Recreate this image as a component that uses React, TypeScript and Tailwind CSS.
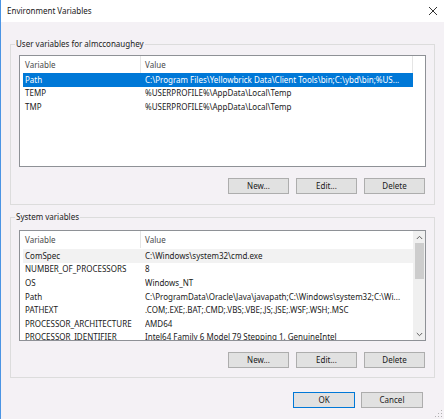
import React from "react";

type Row = { name: string; value: string };

const userVars: Row[] = [
  {
    name: "Path",
    value: "C:\\Program Files\\Yellowbrick Data\\Client Tools\\bin;C:\\ybd\\bin;%US...",
  },
  { name: "TEMP", value: "%USERPROFILE%\\AppData\\Local\\Temp" },
  { name: "TMP", value: "%USERPROFILE%\\AppData\\Local\\Temp" },
];

const systemVars: Row[] = [
  { name: "ComSpec", value: "C:\\Windows\\system32\\cmd.exe" },
  { name: "NUMBER_OF_PROCESSORS", value: "8" },
  { name: "OS", value: "Windows_NT" },
  {
    name: "Path",
    value: "C:\\ProgramData\\Oracle\\Java\\javapath;C:\\Windows\\system32;C:\\Wi...",
  },
  { name: "PATHEXT", value: ".COM;.EXE;.BAT;.CMD;.VBS;.VBE;.JS;.JSE;.WSF;.WSH;.MSC" },
  { name: "PROCESSOR_ARCHITECTURE", value: "AMD64" },
  { name: "PROCESSOR_IDENTIFIER", value: "Intel64 Family 6 Model 79 Stepping 1, GenuineIntel" },
];

function Button({ label, primary }: { label: string; primary?: boolean }) {
  return (
    <button
      className={`h-[16px] w-full flex items-center justify-center bg-[#e1e1e1] text-[#1a1a1a] leading-none ${
        primary ? "border-[1.5px] border-[#0078d7]" : "border border-[#adadad]"
      }`}
    >
      {label}
    </button>
  );
}

function VarRow({ row, state }: { row: Row; state?: "selected" | "hover" }) {
  return (
    <div
      className={`flex h-[13.6px] items-center ml-[3px] whitespace-nowrap overflow-hidden ${
        state === "selected"
          ? "bg-[#0078d7] text-white"
          : state === "hover"
          ? "bg-[#f2f2f2] text-[#1a1a1a]"
          : "text-[#1a1a1a]"
      }`}
    >
      <div className="w-[122px] shrink-0 pl-[2px]">{row.name}</div>
      <div className="flex-1 min-w-0 overflow-hidden">{row.value}</div>
    </div>
  );
}

function Chevron({ up }: { up?: boolean }) {
  return (
    <svg width="7" height="5" viewBox="0 0 7 5">
      <path
        d={up ? "M0.8 4 L3.5 1.3 L6.2 4" : "M0.8 1 L3.5 3.7 L6.2 1"}
        fill="none"
        stroke="#606060"
        strokeWidth="1"
      />
    </svg>
  );
}

function ButtonRow() {
  return (
    <div className="flex justify-end gap-[7px] mt-[11px] mr-[1px]">
      <div className="w-[61px]">
        <Button label="New..." />
      </div>
      <div className="w-[61px]">
        <Button label="Edit..." />
      </div>
      <div className="w-[61px]">
        <Button label="Delete" />
      </div>
    </div>
  );
}

export default function App() {
  return (
    <div className="relative w-[444px] h-[419px] bg-[#f4f1f5] border-l border-[#4a94e4] text-[8px] font-['Noto_Sans',sans-serif] text-[#1a1a1a] overflow-hidden">
      {/* Title bar */}
      <div className="h-[22px] bg-white flex items-center justify-between pl-[6px] pr-[6px]">
        <span className="text-[8px] text-[#202020]">Environment Variables</span>
        <svg width="10" height="10" viewBox="0 0 10 10">
          <path d="M1 1 L9 9 M9 1 L1 9" stroke="#333" strokeWidth="1" />
        </svg>
      </div>

      {/* User variables */}
      <fieldset className="ml-[9px] mt-[15px] w-[425px] min-w-0 border border-[#dcdcdc] px-[8px] pb-[10px]">
        <legend className="ml-[-4px] px-[1px] leading-[14px]">
          User variables for almcconaughey
        </legend>
        <div className="mt-[4px] h-[112px] border border-[#8e9196] bg-white overflow-hidden">
          <div className="flex h-[17px] items-center text-[#4a4a4a]">
            <div className="w-[121px] h-full flex items-center pl-[5px] border-r border-[#e5e5e5]">
              Variable
            </div>
            <div className="flex-1 h-full flex items-center pl-[4px] border-r border-[#e5e5e5]">
              Value
            </div>
            <div className="w-[12px]" />
          </div>
          <div className="w-[393px]">
            {userVars.map((r, i) => (
              <VarRow key={r.name} row={r} state={i === 0 ? "selected" : undefined} />
            ))}
          </div>
        </div>
        <ButtonRow />
      </fieldset>

      {/* System variables */}
      <fieldset className="ml-[9px] mt-[5px] w-[425px] min-w-0 border border-[#dcdcdc] px-[8px] pb-[9px]">
        <legend className="ml-[-4px] px-[1px] leading-[14px]">System variables</legend>
        <div className="mt-[6px] h-[111px] border border-[#8e9196] bg-white flex overflow-hidden">
          <div className="flex-1 min-w-0 overflow-hidden">
            <div className="flex h-[17px] items-center text-[#4a4a4a]">
              <div className="w-[121px] h-full flex items-center pl-[5px] border-r border-[#e5e5e5]">
                Variable
              </div>
              <div className="flex-1 h-full flex items-center pl-[4px]">Value</div>
            </div>
            <div className="mt-[1px]">
              {systemVars.map((r, i) => (
                <VarRow key={r.name + i} row={r} state={i === 0 ? "hover" : undefined} />
              ))}
            </div>
          </div>
          <div className="w-[12px] shrink-0 bg-[#f0f0f0] flex flex-col items-center">
            <div className="h-[12px] flex items-center justify-center">
              <Chevron up />
            </div>
            <div className="w-[9px] h-[36px] bg-[#cdcdcd]" />
            <div className="flex-1" />
            <div className="h-[12px] flex items-center justify-center">
              <Chevron />
            </div>
          </div>
        </div>
        <ButtonRow />
      </fieldset>

      {/* OK / Cancel */}
      <div className="flex justify-end gap-[6px] mt-[14px] pr-[21px]">
        <div className="w-[62px]">
          <Button label="OK" primary />
        </div>
        <div className="w-[62px]">
          <Button label="Cancel" />
        </div>
      </div>

      {/* size grip */}
      <svg className="absolute right-[1px] bottom-[1px]" width="8" height="8" viewBox="0 0 8 8">
        <rect x="6" y="0" width="1" height="1" fill="#b0b0b0" />
        <rect x="3" y="3" width="1" height="1" fill="#b0b0b0" />
        <rect x="6" y="3" width="1" height="1" fill="#b0b0b0" />
        <rect x="0" y="6" width="1" height="1" fill="#b0b0b0" />
        <rect x="3" y="6" width="1" height="1" fill="#b0b0b0" />
        <rect x="6" y="6" width="1" height="1" fill="#b0b0b0" />
      </svg>
    </div>
  );
}
